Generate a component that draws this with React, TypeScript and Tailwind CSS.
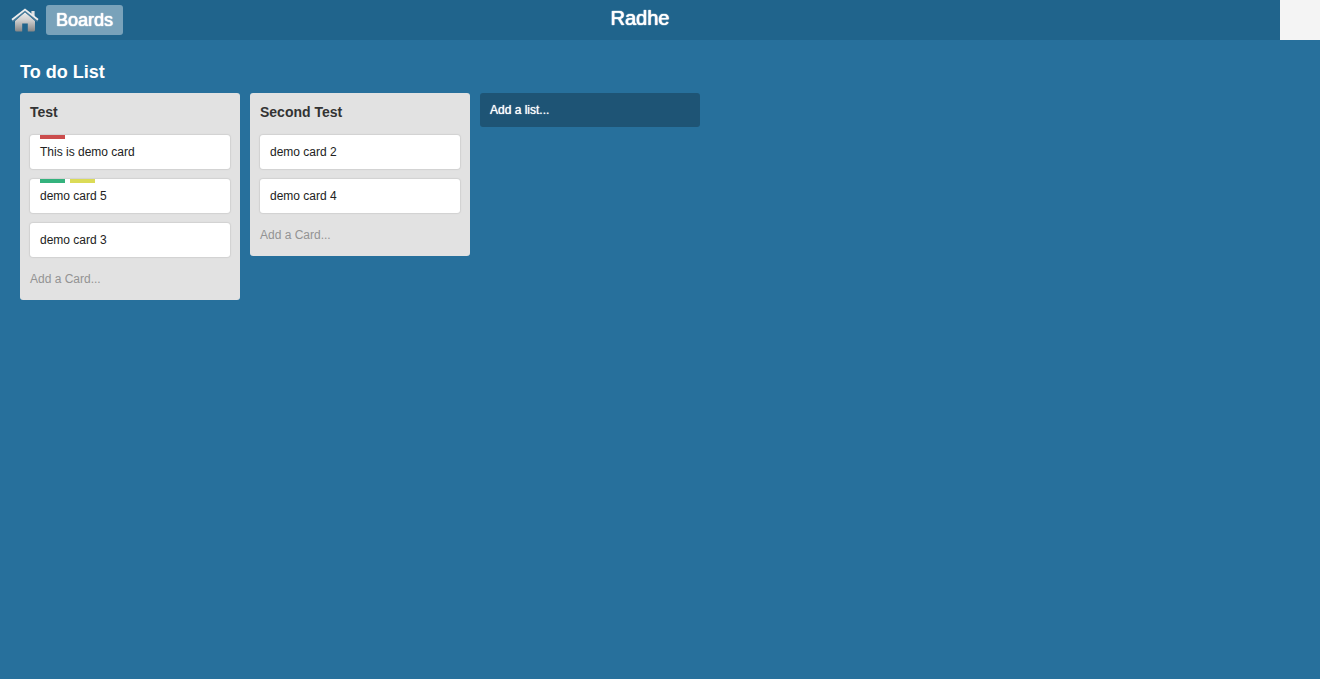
type Label = 'red' | 'green' | 'yellow';

interface Card {
  title: string;
  labels?: Label[];
}

interface List {
  title: string;
  cards: Card[];
}

const labelColors: Record<Label, string> = {
  red: 'bg-[#cb4d4d]',
  green: 'bg-[#34b27d]',
  yellow: 'bg-[#dbdb57]',
};

const lists: List[] = [
  {
    title: 'Test',
    cards: [
      { title: 'This is demo card', labels: ['red'] },
      { title: 'demo card 5', labels: ['green', 'yellow'] },
      { title: 'demo card 3' },
    ],
  },
  {
    title: 'Second Test',
    cards: [{ title: 'demo card 2' }, { title: 'demo card 4' }],
  },
];

function HomeIcon() {
  return (
    <svg viewBox="0 0 28 24" className="h-6 w-7" aria-hidden="true">
      <defs>
        <linearGradient id="house" x1="0" y1="0" x2="0" y2="1">
          <stop offset="0" stopColor="#ededed" />
          <stop offset="0.45" stopColor="#cbcbcb" />
          <stop offset="1" stopColor="#858585" />
        </linearGradient>
      </defs>
      <path d="M20.4 3h3.2v6l-3.2-2.8z" fill="#dfe1e2" />
      <path
        d="M14 4.2 24 13V22Q24 23.6 22.4 23.6H16.8V15.6H11.2V23.6H5.6Q4 23.6 4 22V13Z"
        fill="url(#house)"
      />
      <path d="M1.4 13.2 14 3 26.6 13.2" fill="none" stroke="#4d7f9d" strokeWidth="1.8" />
      <path d="M1 11.8 14 1.6 27 11.8" fill="none" stroke="#eeeeee" strokeWidth="1.8" />
    </svg>
  );
}

function Header() {
  return (
    <header className="flex h-10 bg-[#f4f4f4] pr-10">
      <div className="grid flex-1 grid-cols-3 bg-[#20648c]">
        <nav className="flex items-center gap-[7px] pl-[11px]">
          <a href="#home" aria-label="Home">
            <HomeIcon />
          </a>
          <button
            type="button"
            className="h-[30px] rounded-[3px] bg-[#79a2ba] px-[10px] text-lg leading-[30px] [text-shadow:0_0_1px_#fff,0_0_1px_#fff]"
          >
            Boards
          </button>
        </nav>
        <h1 className="text-center text-xl leading-9 [text-shadow:0_0_1px_#fff,0_0_1px_#fff]">
          Radhe
        </h1>
      </div>
    </header>
  );
}

function CardItem({ title, labels = [] }: Card) {
  return (
    <li className="flex h-[34px] flex-col rounded-[3px] bg-white px-[10px] text-xs text-[#222222] shadow-[0_0_1px_1px_#d2d2d2]">
      <div className="flex h-1 gap-[5px]">
        {labels.map((label) => (
          <span key={label} className={`w-[25px] ${labelColors[label]}`} />
        ))}
      </div>
      <p className="leading-[26px]">{title}</p>
    </li>
  );
}

function ListColumn({ title, cards }: List) {
  return (
    <section className="w-[220px] shrink-0 rounded-[3px] bg-[#e2e2e2] px-[10px] pt-[10px] pb-3">
      <h3 className="text-sm leading-[18px] font-bold text-[#333333]">{title}</h3>
      <ul className="mt-[14px] flex flex-col gap-[10px]">
        {cards.map((card) => (
          <CardItem key={card.title} {...card} />
        ))}
      </ul>
      <button type="button" className="mt-[13px] block text-xs leading-[18px] text-[#939393]">
        Add a Card...
      </button>
    </section>
  );
}

export default function App() {
  return (
    <div className="flex min-h-screen flex-col bg-[#27709c] font-['Liberation_Sans',Arial,sans-serif] text-white">
      <Header />
      <main className="flex-1 px-5 pt-5">
        <h2 className="text-lg leading-6 font-bold">To do List</h2>
        <div className="mt-[9px] flex items-start gap-[10px]">
          {lists.map((list) => (
            <ListColumn key={list.title} {...list} />
          ))}
          <button
            type="button"
            className="h-[34px] w-[220px] shrink-0 rounded-[3px] bg-[#1e5475] px-[10px] text-left text-xs [text-shadow:0_0_1px_#fff]"
          >
            Add a list...
          </button>
        </div>
      </main>
    </div>
  );
}
